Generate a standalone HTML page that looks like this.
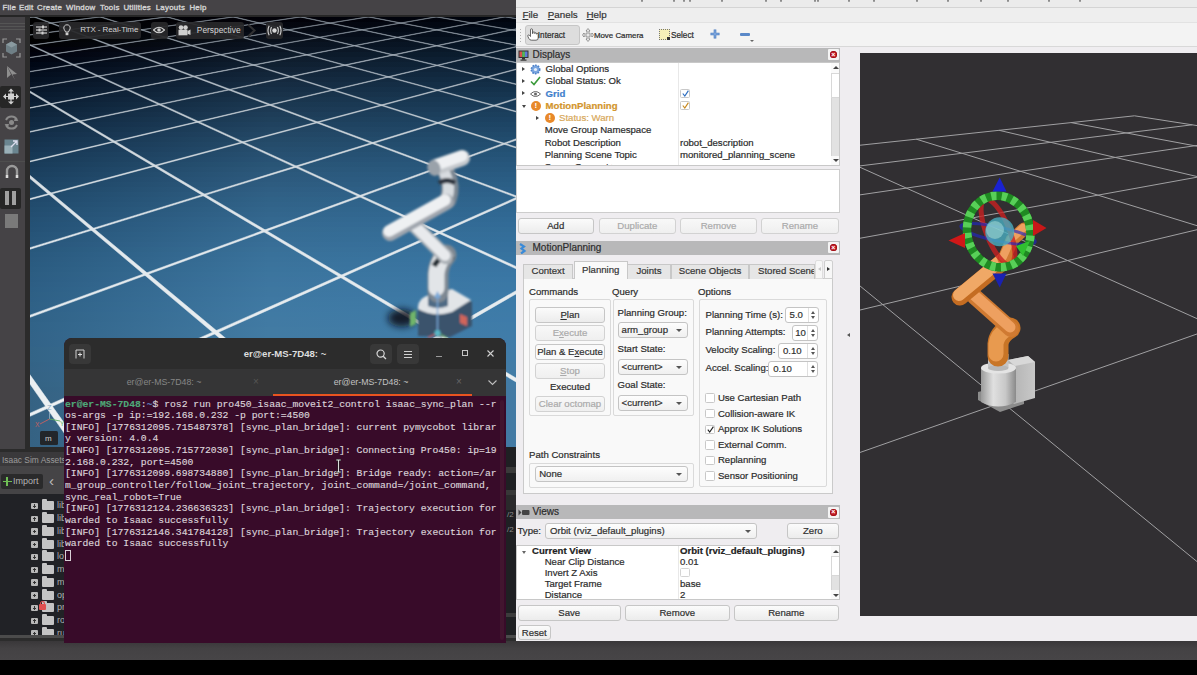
<!DOCTYPE html>
<html><head><meta charset="utf-8">
<style>
*{box-sizing:border-box;margin:0;padding:0}
html,body{width:1197px;height:675px;overflow:hidden;background:#000;font-family:"Liberation Sans",sans-serif}
.abs{position:absolute}
#bottomstrip{left:0;top:641px;width:1197px;height:19px;background:linear-gradient(#393739 0%,#444244 40%,#474547 100%)}
/* ---------- ISAAC ---------- */
#isaac{left:0;top:0;width:516px;height:641px;background:#2b2b2b;overflow:hidden}
#imenu{left:0;top:0;width:516px;height:15px;background:#454346;color:#d8d8d8;font-size:7.9px;line-height:15px;white-space:nowrap;letter-spacing:0.25px;-webkit-text-stroke:0.35px #d0d0d0}
#itool{left:0;top:17px;width:25px;height:432px;background:#454346}
#vp{left:30px;top:17px;width:486px;height:430px;overflow:hidden;background:#2a5b86}
.vbtn{position:absolute;top:4.8px;height:17px;background:rgba(40,40,42,0.92);border-radius:3px;color:#d4d4d4;font-size:8.4px;line-height:16.5px;white-space:nowrap}
#iasset{left:0;top:452px;width:516px;height:14px;background:#3a393b;color:#9c9c9c;font-size:8.4px;line-height:16px;padding-left:2px}
#itbar{left:0;top:466px;width:516px;height:28px;background:#454446}
#itree{left:0;top:494px;width:516px;height:141px;background:#212226}
#isep2{left:0;top:635px;width:516px;height:6px;background:linear-gradient(#4b4b4b 0,#4b4b4b 50%,#2c2c2c 50%)}
.trow{position:absolute;left:31px;height:12px;width:200px}
.tplus{position:absolute;left:0;top:2.5px;width:6.5px;height:6.5px;background:#b8b8b8;border-radius:1px}
.tplus:after{content:"";position:absolute;left:1.5px;top:2.75px;width:3.5px;height:1px;background:#333}
.tplus:before{content:"";position:absolute;left:2.75px;top:1.5px;width:1px;height:3.5px;background:#333}
.tfold{position:absolute;left:11px;top:1px;width:12px;height:9px;background:#c4c4c4;border-radius:1px}
.tfold:before{content:"";position:absolute;left:0;top:-2px;width:5px;height:3px;background:#c4c4c4;border-radius:1px 1px 0 0}
.ttxt{position:absolute;left:26px;top:-1px;color:#b0b0b0;font-size:9px;line-height:12px}
/* ---------- TERMINAL ---------- */
#term{left:64px;top:338px;width:442px;height:305px;background:#380b29;border-radius:8px 8px 0 0;overflow:hidden}
#thead{left:0;top:0;width:442px;height:31px;background:#2c2c2c}
#ttabs{left:0;top:31px;width:442px;height:27px;background:#353536}
#tcontent{left:1px;top:58px;width:440px;height:247px;font-family:"Liberation Mono",monospace;font-size:9.73px;line-height:11.66px;color:#dcd4da;white-space:pre;padding-top:2.5px;-webkit-text-stroke:0.15px currentColor}
/* ---------- RVIZ ---------- */
#rviz{left:516px;top:0;width:681px;height:641px;background:#efedf0;overflow:hidden;color:#3c3c3c}

.rt{position:absolute;white-space:nowrap;font-size:9.6px;color:#2c2c2c;line-height:12px;-webkit-text-stroke:0.2px currentColor}
.btn,.combo,.spin,.tab,.hdr .t{-webkit-text-stroke:0.2px currentColor}
.hdr{position:absolute;left:0;width:323.5px;height:14px;background:#b8b8b9}
.hdr .t{position:absolute;left:16.5px;top:0;font-size:10px;line-height:14px;color:#2c2c2c}
.xbtn{position:absolute;left:312px;top:1.5px;width:11px;height:11px;background:#f4f4f4;border-radius:1px}
.xbtn:after{content:"";position:absolute;left:2px;top:2px;width:7px;height:7px;border-radius:50%;background:#c8202a;box-shadow:inset 0 0 0 1px #a01018}
.xbtn:before{content:"\00d7";position:absolute;left:3.3px;top:0.5px;font-size:7px;line-height:10px;color:#fff;z-index:2;font-weight:bold}
.btn{position:absolute;height:16px;background:linear-gradient(#fbfbfb,#ececec);border:1px solid #c6c6c6;border-radius:3px;font-size:9.6px;line-height:14px;text-align:center;color:#303030;white-space:nowrap}
.btn.dis{color:#aaaaaa;border-color:#d2d2d2;background:linear-gradient(#f8f8f8,#efefef)}
.combo{position:absolute;height:16px;background:linear-gradient(#fdfdfd,#f0f0f0);border:1px solid #c4c4c4;border-radius:3px;font-size:9.6px;line-height:14px;color:#303030;padding-left:3px;white-space:nowrap}
.combo:after{content:"";position:absolute;right:4.5px;top:6px;border-left:3px solid transparent;border-right:3px solid transparent;border-top:3px solid #555}
.spin{position:absolute;height:16px;background:#fff;border:1px solid #c4c4c4;border-radius:3px;font-size:9.6px;line-height:14px;color:#303030;padding-left:4px}
.spin:after{content:"";position:absolute;right:0;top:0;width:9px;height:14px;border-left:1px solid #e0e0e0}
.sp1{position:absolute;right:2.5px;top:3px;border-left:2.5px solid transparent;border-right:2.5px solid transparent;border-bottom:3px solid #555}
.sp2{position:absolute;right:2.5px;bottom:3px;border-left:2.5px solid transparent;border-right:2.5px solid transparent;border-top:3px solid #555}
.cb{position:absolute;width:9.5px;height:9.5px;background:#fff;border:1px solid #c8c8c8;border-radius:1.5px}
.gbox{position:absolute;border:1px solid #dadada;border-radius:2px}
.tab{position:absolute;top:264px;height:14.5px;background:#e6e6e6;border:1px solid #c8c8c8;border-bottom:none;font-size:9.6px;line-height:12px;text-align:center;color:#353535;white-space:nowrap;overflow:hidden}
.arr{position:absolute;width:0;height:0;border-top:2.5px solid transparent;border-bottom:2.5px solid transparent;border-left:3px solid #444}
.arrd{position:absolute;width:0;height:0;border-left:2.5px solid transparent;border-right:2.5px solid transparent;border-top:3px solid #444}
.sbar{position:absolute;left:314.5px;width:9px;background:#e2e2e2;border-left:1px solid #d4d4d4}
#r3d{left:344px;top:53px;width:337px;height:563px;background:#312f32;overflow:hidden}
</style></head>
<body>
<div id="bottomstrip" class="abs"></div>

<div id="isaac" class="abs">
  <div id="imenu" class="abs"><span style="position:absolute;left:2.5px;top:0px">File</span><span style="position:absolute;left:18.9px;top:0px">Edit</span><span style="position:absolute;left:37.0px;top:0px">Create</span><span style="position:absolute;left:66.0px;top:0px">Window</span><span style="position:absolute;left:100.0px;top:0px">Tools</span><span style="position:absolute;left:123.4px;top:0px">Utilities</span><span style="position:absolute;left:155.7px;top:0px">Layouts</span><span style="position:absolute;left:189.4px;top:0px">Help</span></div>
  <div class="abs" style="left:0;top:15px;width:516px;height:2px;background:#262626"></div>
  <div id="itool" class="abs">
<div class="abs" style="left:0;top:6px;width:25px;height:1px;background:#555"></div>
<div class="abs" style="left:0;top:9px;width:25px;height:1px;background:#555"></div>
<div class="abs" style="left:0;top:12px;width:25px;height:1px;background:#555"></div>
<svg class="abs" style="left:2px;top:21px" width="19" height="20" viewBox="0 0 19 20"><path d="M1 5 V1 H5 M14 1 H18 V5 M18 15 V19 H14 M5 19 H1 V15" fill="none" stroke="#9a9a9a" stroke-width="1.2"/><path d="M9.5 3.5 L15 6.5 L15 13.5 L9.5 16.5 L4 13.5 L4 6.5Z" fill="#6f7f86"/><path d="M4 6.5 L9.5 9.5 L15 6.5 L9.5 3.5Z" fill="#8a9aa0"/></svg>
<svg class="abs" style="left:6px;top:48px" width="12" height="16" viewBox="0 0 12 16"><path d="M1 1 L11 9 L6.5 9.5 L9 15 L1 1Z" fill="#8e8e8e"/><path d="M1 1 L1 13 L5 9.5Z" fill="#8e8e8e"/></svg>
<div class="abs" style="left:0;top:69px;width:21px;height:21.5px;background:#262626;border-radius:2px"></div>
<svg class="abs" style="left:3px;top:71px" width="16" height="17" viewBox="0 0 16 17"><path d="M8 0.5 L11 3.5 H5Z M8 16.5 L11 13.5 H5Z M0 8.5 L3 5.5 V11.5Z M16 8.5 L13 5.5 V11.5Z" fill="#d0d0d0"/><rect x="5" y="5.5" width="6" height="6" fill="#d0d0d0"/><path d="M8 3 V14 M2.5 8.5 H13.5" stroke="#d0d0d0" stroke-width="1.2"/></svg>
<svg class="abs" style="left:3px;top:97px" width="17" height="17" viewBox="0 0 17 17"><path d="M3 6 A6 6 0 0 1 14 6 M14 11 A6 6 0 0 1 3 11" fill="none" stroke="#8a8a8a" stroke-width="2"/><path d="M12 3.5 L15.5 7 L11 7Z M5 13.5 L1.5 10 L6 10Z" fill="#8a8a8a"/><circle cx="8.5" cy="8.5" r="2.5" fill="#8a8a8a"/></svg>
<svg class="abs" style="left:4px;top:122px" width="15" height="15" viewBox="0 0 15 15"><rect x="0.5" y="0.5" width="14" height="14" fill="#6a8590"/><rect x="0.5" y="6.5" width="8" height="8" fill="#9ab0b8"/><path d="M7 8 L13 2 M9 2 H13 V6" stroke="#dde" stroke-width="1.3" fill="none"/></svg>
<div class="abs" style="left:0;top:144px;width:25px;height:1px;background:#4e4e4e"></div>
<svg class="abs" style="left:5px;top:147px" width="14" height="15" viewBox="0 0 14 15"><path d="M2 14 V7 A5 5 0 0 1 12 7 V14" fill="none" stroke="#9a9a9a" stroke-width="2.4"/><rect x="0.8" y="11" width="2.4" height="3" fill="#ddd"/><rect x="10.8" y="11" width="2.4" height="3" fill="#ddd"/></svg>
<div class="abs" style="left:0;top:170.5px;width:21px;height:21.5px;background:#262626;border-radius:2px"></div>
<div class="abs" style="left:4.5px;top:174px;width:4.5px;height:14px;background:#a0a0a0"></div>
<div class="abs" style="left:11.5px;top:174px;width:4.5px;height:14px;background:#a0a0a0"></div>
<div class="abs" style="left:5px;top:197px;width:13px;height:14px;background:#7a7a7a"></div>

  </div>
  <div id="vp" class="abs">
<div style="position:absolute;left:0;top:0px;width:486px;height:5px;background:linear-gradient(90deg,#000000,#020108 49%,#00050f)"></div><div style="position:absolute;left:0;top:5px;width:486px;height:5px;background:linear-gradient(90deg,#000000,#04050d 49%,#010814)"></div><div style="position:absolute;left:0;top:10px;width:486px;height:5px;background:linear-gradient(90deg,#000000,#050912 49%,#020c19)"></div><div style="position:absolute;left:0;top:15px;width:486px;height:5px;background:linear-gradient(90deg,#000000,#070c17 49%,#040f1d)"></div><div style="position:absolute;left:0;top:20px;width:486px;height:5px;background:linear-gradient(90deg,#000000,#09101b 49%,#061322)"></div><div style="position:absolute;left:0;top:25px;width:486px;height:5px;background:linear-gradient(90deg,#000003,#0a1320 49%,#071626)"></div><div style="position:absolute;left:0;top:30px;width:486px;height:5px;background:linear-gradient(90deg,#000008,#0c1624 49%,#091a2b)"></div><div style="position:absolute;left:0;top:35px;width:486px;height:5px;background:linear-gradient(90deg,#00010c,#0d1a29 49%,#0a1d2f)"></div><div style="position:absolute;left:0;top:40px;width:486px;height:5px;background:linear-gradient(90deg,#000410,#0f1d2d 49%,#0c2034)"></div><div style="position:absolute;left:0;top:45px;width:486px;height:5px;background:linear-gradient(90deg,#000715,#102031 49%,#0d2338)"></div><div style="position:absolute;left:0;top:50px;width:486px;height:5px;background:linear-gradient(90deg,#020a19,#122336 49%,#0f263c)"></div><div style="position:absolute;left:0;top:55px;width:486px;height:5px;background:linear-gradient(90deg,#030d1d,#13263a 49%,#102940)"></div><div style="position:absolute;left:0;top:60px;width:486px;height:5px;background:linear-gradient(90deg,#041021,#15293e 49%,#112c44)"></div><div style="position:absolute;left:0;top:65px;width:486px;height:5px;background:linear-gradient(90deg,#061325,#162c42 49%,#132f48)"></div><div style="position:absolute;left:0;top:70px;width:486px;height:5px;background:linear-gradient(90deg,#071629,#172f46 49%,#14324c)"></div><div style="position:absolute;left:0;top:75px;width:486px;height:5px;background:linear-gradient(90deg,#08192d,#193249 49%,#163550)"></div><div style="position:absolute;left:0;top:80px;width:486px;height:5px;background:linear-gradient(90deg,#0a1c31,#1a354d 49%,#173854)"></div><div style="position:absolute;left:0;top:85px;width:486px;height:5px;background:linear-gradient(90deg,#0b1f34,#1b3851 49%,#183a57)"></div><div style="position:absolute;left:0;top:90px;width:486px;height:5px;background:linear-gradient(90deg,#0c2238,#1d3a54 49%,#1a3d5b)"></div><div style="position:absolute;left:0;top:95px;width:486px;height:5px;background:linear-gradient(90deg,#0e243b,#1e3d58 49%,#1b405e)"></div><div style="position:absolute;left:0;top:100px;width:486px;height:5px;background:linear-gradient(90deg,#0f273f,#1f405b 49%,#1c4262)"></div><div style="position:absolute;left:0;top:105px;width:486px;height:5px;background:linear-gradient(90deg,#102942,#20425f 49%,#1d4565)"></div><div style="position:absolute;left:0;top:110px;width:486px;height:5px;background:linear-gradient(90deg,#112c45,#224562 49%,#1f4768)"></div><div style="position:absolute;left:0;top:115px;width:486px;height:5px;background:linear-gradient(90deg,#132e49,#234765 49%,#204a6b)"></div><div style="position:absolute;left:0;top:120px;width:486px;height:5px;background:linear-gradient(90deg,#14314c,#244a68 49%,#214c6e)"></div><div style="position:absolute;left:0;top:125px;width:486px;height:5px;background:linear-gradient(90deg,#15334f,#254c6b 49%,#224e71)"></div><div style="position:absolute;left:0;top:130px;width:486px;height:5px;background:linear-gradient(90deg,#163552,#264e6e 49%,#235174)"></div><div style="position:absolute;left:0;top:135px;width:486px;height:5px;background:linear-gradient(90deg,#173855,#275071 49%,#245377)"></div><div style="position:absolute;left:0;top:140px;width:486px;height:5px;background:linear-gradient(90deg,#183a57,#285274 49%,#26557a)"></div><div style="position:absolute;left:0;top:145px;width:486px;height:5px;background:linear-gradient(90deg,#193c5a,#295576 49%,#27577d)"></div><div style="position:absolute;left:0;top:150px;width:486px;height:5px;background:linear-gradient(90deg,#1a3e5d,#2b5779 49%,#28597f)"></div><div style="position:absolute;left:0;top:155px;width:486px;height:5px;background:linear-gradient(90deg,#1b405f,#2c597c 49%,#295b82)"></div><div style="position:absolute;left:0;top:160px;width:486px;height:5px;background:linear-gradient(90deg,#1c4262,#2d5a7e 49%,#2a5d84)"></div><div style="position:absolute;left:0;top:165px;width:486px;height:5px;background:linear-gradient(90deg,#1d4464,#2e5c80 49%,#2b5f86)"></div><div style="position:absolute;left:0;top:170px;width:486px;height:5px;background:linear-gradient(90deg,#1e4666,#2f5e83 49%,#2c6089)"></div><div style="position:absolute;left:0;top:175px;width:486px;height:5px;background:linear-gradient(90deg,#1f4869,#306085 49%,#2d628b)"></div><div style="position:absolute;left:0;top:180px;width:486px;height:5px;background:linear-gradient(90deg,#20496b,#306287 49%,#2e648d)"></div><div style="position:absolute;left:0;top:185px;width:486px;height:5px;background:linear-gradient(90deg,#214b6d,#316389 49%,#2f658f)"></div><div style="position:absolute;left:0;top:190px;width:486px;height:5px;background:linear-gradient(90deg,#224d6f,#32658b 49%,#2f6791)"></div><div style="position:absolute;left:0;top:195px;width:486px;height:5px;background:linear-gradient(90deg,#234e71,#33668d 49%,#306893)"></div><div style="position:absolute;left:0;top:200px;width:486px;height:5px;background:linear-gradient(90deg,#245073,#34688f 49%,#316a95)"></div><div style="position:absolute;left:0;top:205px;width:486px;height:5px;background:linear-gradient(90deg,#245175,#356991 49%,#326b97)"></div><div style="position:absolute;left:0;top:210px;width:486px;height:5px;background:linear-gradient(90deg,#255276,#366b92 49%,#336d98)"></div><div style="position:absolute;left:0;top:215px;width:486px;height:5px;background:linear-gradient(90deg,#265478,#366c94 49%,#346e9a)"></div><div style="position:absolute;left:0;top:220px;width:486px;height:5px;background:linear-gradient(90deg,#275579,#376d95 49%,#346f9b)"></div><div style="position:absolute;left:0;top:225px;width:486px;height:5px;background:linear-gradient(90deg,#28567b,#386e97 49%,#35709d)"></div><div style="position:absolute;left:0;top:230px;width:486px;height:5px;background:linear-gradient(90deg,#28587c,#397098 49%,#36719e)"></div><div style="position:absolute;left:0;top:235px;width:486px;height:5px;background:linear-gradient(90deg,#29597e,#39719a 49%,#37739f)"></div><div style="position:absolute;left:0;top:240px;width:486px;height:5px;background:linear-gradient(90deg,#2a5a7f,#3a729b 49%,#3774a1)"></div><div style="position:absolute;left:0;top:245px;width:486px;height:5px;background:linear-gradient(90deg,#2a5b80,#3b739c 49%,#3874a2)"></div><div style="position:absolute;left:0;top:250px;width:486px;height:5px;background:linear-gradient(90deg,#2b5c81,#3b749d 49%,#3975a3)"></div><div style="position:absolute;left:0;top:255px;width:486px;height:5px;background:linear-gradient(90deg,#2c5d82,#3c759e 49%,#3976a4)"></div><div style="position:absolute;left:0;top:260px;width:486px;height:5px;background:linear-gradient(90deg,#2c5d83,#3d759f 49%,#3a77a5)"></div><div style="position:absolute;left:0;top:265px;width:486px;height:5px;background:linear-gradient(90deg,#2d5e84,#3d76a0 49%,#3b78a5)"></div><div style="position:absolute;left:0;top:270px;width:486px;height:5px;background:linear-gradient(90deg,#2d5f85,#3e77a0 49%,#3b78a6)"></div><div style="position:absolute;left:0;top:275px;width:486px;height:5px;background:linear-gradient(90deg,#2e6085,#3e77a1 49%,#3c79a7)"></div><div style="position:absolute;left:0;top:280px;width:486px;height:5px;background:linear-gradient(90deg,#2e6086,#3f78a2 49%,#3c7aa7)"></div><div style="position:absolute;left:0;top:285px;width:486px;height:5px;background:linear-gradient(90deg,#2f6186,#3f79a2 49%,#3d7aa8)"></div><div style="position:absolute;left:0;top:290px;width:486px;height:5px;background:linear-gradient(90deg,#2f6187,#4079a3 49%,#3d7ba8)"></div><div style="position:absolute;left:0;top:295px;width:486px;height:5px;background:linear-gradient(90deg,#306287,#407aa3 49%,#3e7ba8)"></div><div style="position:absolute;left:0;top:300px;width:486px;height:5px;background:linear-gradient(90deg,#306287,#417aa3 49%,#3e7ba9)"></div><div style="position:absolute;left:0;top:305px;width:486px;height:5px;background:linear-gradient(90deg,#316388,#417aa3 49%,#3f7ca9)"></div><div style="position:absolute;left:0;top:310px;width:486px;height:5px;background:linear-gradient(90deg,#316388,#427ba3 49%,#3f7ca9)"></div><div style="position:absolute;left:0;top:315px;width:486px;height:5px;background:linear-gradient(90deg,#326388,#427ba3 49%,#407ca9)"></div><div style="position:absolute;left:0;top:320px;width:486px;height:5px;background:linear-gradient(90deg,#326388,#427ba3 49%,#407ca9)"></div><div style="position:absolute;left:0;top:325px;width:486px;height:5px;background:linear-gradient(90deg,#326388,#437ba3 49%,#407ca9)"></div><div style="position:absolute;left:0;top:330px;width:486px;height:5px;background:linear-gradient(90deg,#336487,#437ba3 49%,#417ca9)"></div><div style="position:absolute;left:0;top:335px;width:486px;height:5px;background:linear-gradient(90deg,#336487,#437ba3 49%,#417ca8)"></div><div style="position:absolute;left:0;top:340px;width:486px;height:5px;background:linear-gradient(90deg,#336487,#447ba2 49%,#417ca8)"></div><div style="position:absolute;left:0;top:345px;width:486px;height:5px;background:linear-gradient(90deg,#336386,#447ba2 49%,#427ca7)"></div><div style="position:absolute;left:0;top:350px;width:486px;height:5px;background:linear-gradient(90deg,#346386,#447ba1 49%,#427ca7)"></div><div style="position:absolute;left:0;top:355px;width:486px;height:5px;background:linear-gradient(90deg,#346385,#457aa1 49%,#427ca6)"></div><div style="position:absolute;left:0;top:360px;width:486px;height:5px;background:linear-gradient(90deg,#346385,#457aa0 49%,#427ba6)"></div><div style="position:absolute;left:0;top:365px;width:486px;height:5px;background:linear-gradient(90deg,#346384,#457a9f 49%,#427ba5)"></div><div style="position:absolute;left:0;top:370px;width:486px;height:5px;background:linear-gradient(90deg,#346283,#45799f 49%,#437aa4)"></div><div style="position:absolute;left:0;top:375px;width:486px;height:5px;background:linear-gradient(90deg,#356283,#45799e 49%,#437aa4)"></div><div style="position:absolute;left:0;top:380px;width:486px;height:5px;background:linear-gradient(90deg,#356283,#45799e 49%,#437aa4)"></div><div style="position:absolute;left:0;top:385px;width:486px;height:5px;background:linear-gradient(90deg,#356283,#45799e 49%,#437aa4)"></div><div style="position:absolute;left:0;top:390px;width:486px;height:5px;background:linear-gradient(90deg,#356283,#45799e 49%,#437aa4)"></div><div style="position:absolute;left:0;top:395px;width:486px;height:5px;background:linear-gradient(90deg,#356283,#45799e 49%,#437aa4)"></div><div style="position:absolute;left:0;top:400px;width:486px;height:5px;background:linear-gradient(90deg,#356283,#45799e 49%,#437aa4)"></div><div style="position:absolute;left:0;top:405px;width:486px;height:5px;background:linear-gradient(90deg,#356283,#45799e 49%,#437aa4)"></div><div style="position:absolute;left:0;top:410px;width:486px;height:5px;background:linear-gradient(90deg,#356283,#45799e 49%,#437aa4)"></div><div style="position:absolute;left:0;top:415px;width:486px;height:5px;background:linear-gradient(90deg,#356283,#45799e 49%,#437aa4)"></div><div style="position:absolute;left:0;top:420px;width:486px;height:5px;background:linear-gradient(90deg,#356283,#45799e 49%,#437aa4)"></div><div style="position:absolute;left:0;top:425px;width:486px;height:5px;background:linear-gradient(90deg,#356283,#45799e 49%,#437aa4)"></div><svg class="abs" style="left:0;top:0" width="486" height="430" viewBox="0 0 486 430"><defs><linearGradient id="lnfade" gradientUnits="userSpaceOnUse" x1="0" y1="0" x2="0" y2="430"><stop offset="0" stop-color="#8a949e"/><stop offset="0.1" stop-color="#aab4be"/><stop offset="0.25" stop-color="#ccd4da"/><stop offset="0.5" stop-color="#e2e8ec"/><stop offset="1" stop-color="#eef2f4"/></linearGradient></defs><g fill="url(#lnfade)" stroke="url(#lnfade)" stroke-width="0.5"><polygon points="77.4,-84.0 76.9,-84.0 22794.3,2465.6 22309.9,2407.0"/><polygon points="59.4,-83.1 58.9,-83.0 21467.2,2474.0 21012.5,2415.3"/><polygon points="40.8,-82.1 40.3,-82.1 20140.0,2482.5 19715.2,2423.6"/><polygon points="21.6,-81.1 21.1,-81.1 18812.9,2490.9 18417.8,2431.8"/><polygon points="1.8,-80.1 1.2,-80.1 17485.7,2499.4 17120.4,2440.1"/><polygon points="-18.7,-79.1 -19.3,-79.1 16158.6,2507.9 15823.1,2448.4"/><polygon points="-39.9,-78.0 -40.5,-78.0 14831.4,2516.3 14525.7,2456.7"/><polygon points="-61.9,-76.9 -62.5,-76.9 13504.3,2524.8 13228.4,2464.9"/><polygon points="-84.6,-75.7 -85.3,-75.7 12177.1,2533.2 11931.0,2473.2"/><polygon points="-108.2,-74.5 -108.9,-74.5 10850.0,2541.7 10633.6,2481.5"/><polygon points="-132.7,-73.3 -133.3,-73.3 9522.8,2550.2 9336.3,2489.7"/><polygon points="-158.0,-72.0 -158.7,-72.0 8195.7,2558.6 8038.9,2498.0"/><polygon points="-184.4,-70.7 -185.1,-70.6 6868.5,2567.1 6741.6,2506.3"/><polygon points="-211.7,-69.3 -212.5,-69.3 5541.4,2575.5 5444.2,2514.5"/><polygon points="-240.2,-67.8 -241.0,-67.8 4214.2,2584.0 4146.9,2522.8"/><polygon points="-269.8,-66.3 -270.6,-66.3 2887.1,2592.5 2849.5,2531.1"/><polygon points="-300.7,-64.8 -301.5,-64.7 1559.9,2600.9 1552.1,2539.4"/><polygon points="-332.9,-63.1 -333.8,-63.1 232.8,2609.4 254.8,2547.6"/><polygon points="-366.4,-61.4 -367.4,-61.4 -1094.3,2617.8 -1042.6,2555.9"/><polygon points="-401.5,-59.7 -402.5,-59.6 -2421.5,2626.3 -2339.9,2564.2"/><polygon points="-438.2,-57.8 -439.2,-57.7 -3748.6,2634.7 -3637.3,2572.4"/><polygon points="-476.5,-55.8 -477.6,-55.8 -5075.8,2643.2 -4934.6,2580.7"/><polygon points="-516.7,-53.8 -517.8,-53.7 -6402.9,2651.7 -6232.0,2589.0"/><polygon points="-558.9,-51.7 -560.0,-51.6 -7730.1,2660.1 -7529.4,2597.2"/><polygon points="-603.1,-49.4 -604.3,-49.3 -9057.2,2668.6 -8826.7,2605.5"/><polygon points="-649.6,-47.0 -650.9,-47.0 -10384.4,2677.0 -10124.1,2613.8"/><polygon points="-698.6,-44.6 -700.0,-44.5 -11711.5,2685.5 -11421.4,2622.0"/><polygon points="-750.2,-41.9 -751.7,-41.9 -13038.7,2694.0 -12718.8,2630.3"/><polygon points="-804.7,-39.2 -806.2,-39.1 -14365.8,2702.4 -14016.1,2638.6"/><polygon points="-862.3,-36.2 -863.9,-36.2 -15693.0,2710.9 -15313.5,2646.9"/><polygon points="-923.3,-33.1 -925.0,-33.1 -17020.1,2719.3 -16610.9,2655.1"/><polygon points="-988.0,-29.9 -989.8,-29.8 -18347.3,2727.8 -17908.2,2663.4"/><polygon points="326.2,-96.6 326.4,-96.6 -60606.9,2999.5 -59157.0,2924.1"/><polygon points="335.1,-96.2 335.4,-96.2 -59181.9,2990.4 -57766.3,2915.3"/><polygon points="344.3,-95.7 344.6,-95.7 -57756.9,2981.3 -56375.6,2906.4"/><polygon points="353.7,-95.2 354.0,-95.2 -56331.9,2972.2 -54984.8,2897.5"/><polygon points="363.4,-94.7 363.7,-94.7 -54906.9,2963.1 -53594.1,2888.7"/><polygon points="373.4,-94.2 373.7,-94.2 -53481.9,2954.0 -52203.4,2879.8"/><polygon points="383.6,-93.6 383.9,-93.6 -52056.9,2945.0 -50812.7,2870.9"/><polygon points="394.2,-93.1 394.5,-93.1 -50631.9,2935.9 -49422.0,2862.1"/><polygon points="405.0,-92.5 405.3,-92.5 -49207.0,2926.8 -48031.3,2853.2"/><polygon points="416.2,-92.0 416.5,-91.9 -47782.0,2917.7 -46640.6,2844.3"/><polygon points="427.7,-91.4 428.0,-91.3 -46357.0,2908.6 -45249.9,2835.5"/><polygon points="439.5,-90.7 439.9,-90.7 -44932.0,2899.5 -43859.2,2826.6"/><polygon points="451.8,-90.1 452.1,-90.1 -43507.0,2890.5 -42468.5,2817.7"/><polygon points="464.4,-89.4 464.7,-89.4 -42082.0,2881.4 -41077.8,2808.9"/><polygon points="477.4,-88.8 477.7,-88.8 -40657.0,2872.3 -39687.1,2800.0"/><polygon points="490.8,-88.1 491.2,-88.1 -39232.0,2863.2 -38296.4,2791.2"/><polygon points="504.7,-87.4 505.1,-87.3 -37807.0,2854.1 -36905.7,2782.3"/><polygon points="519.1,-86.6 519.5,-86.6 -36382.0,2845.1 -35515.0,2773.4"/><polygon points="533.9,-85.8 534.3,-85.8 -34957.1,2836.0 -34124.3,2764.6"/><polygon points="549.2,-85.0 549.7,-85.0 -33532.1,2826.9 -32733.6,2755.7"/><polygon points="565.1,-84.2 565.6,-84.2 -32107.1,2817.8 -31342.9,2746.8"/><polygon points="581.6,-83.4 582.1,-83.3 -30682.1,2808.7 -29952.2,2738.0"/><polygon points="598.7,-82.5 599.2,-82.4 -29257.1,2799.6 -28561.5,2729.1"/><polygon points="616.4,-81.5 616.9,-81.5 -27832.1,2790.6 -27170.8,2720.2"/><polygon points="634.8,-80.6 635.3,-80.6 -26407.1,2781.5 -25780.1,2711.4"/><polygon points="653.9,-79.6 654.4,-79.6 -24982.1,2772.4 -24389.4,2702.5"/><polygon points="673.8,-78.6 674.3,-78.5 -23557.1,2763.3 -22998.7,2693.6"/><polygon points="694.4,-77.5 695.0,-77.5 -22132.1,2754.2 -21608.0,2684.8"/><polygon points="716.0,-76.4 716.6,-76.3 -20707.1,2745.1 -20217.3,2675.9"/><polygon points="738.4,-75.2 739.0,-75.2 -19282.2,2736.1 -18826.6,2667.1"/><polygon points="761.8,-74.0 762.4,-74.0 -17857.2,2727.0 -17435.9,2658.2"/><polygon points="786.2,-72.7 786.9,-72.7 -16432.2,2717.9 -16045.2,2649.3"/><polygon points="811.7,-71.4 812.4,-71.4 -15007.2,2708.8 -14654.5,2640.5"/><polygon points="838.4,-70.0 839.2,-70.0 -13582.2,2699.7 -13263.8,2631.6"/><polygon points="866.4,-68.6 867.1,-68.5 -12157.2,2690.6 -11873.1,2622.7"/><polygon points="895.7,-67.0 896.5,-67.0 -10732.2,2681.6 -10482.4,2613.9"/><polygon points="926.4,-65.4 927.3,-65.4 -9307.2,2672.5 -9091.7,2605.0"/><polygon points="958.7,-63.8 959.6,-63.7 -7882.2,2663.4 -7701.0,2596.1"/><polygon points="992.7,-62.0 993.7,-61.9 -6457.2,2654.3 -6310.2,2587.3"/><polygon points="1028.5,-60.1 1029.5,-60.1 -5032.2,2645.2 -4919.5,2578.4"/><polygon points="1066.3,-58.2 1067.3,-58.1 -3607.3,2636.1 -3528.8,2569.5"/><polygon points="1106.2,-56.1 1107.3,-56.0 -2182.3,2627.1 -2138.1,2560.7"/><polygon points="1148.4,-53.9 1149.6,-53.8 -757.3,2618.0 -747.4,2551.8"/><polygon points="1193.2,-51.6 1194.4,-51.5 667.7,2608.9 643.3,2543.0"/><polygon points="1240.6,-49.1 1242.0,-49.0 2092.7,2599.8 2034.0,2534.1"/><polygon points="1291.2,-46.5 1292.6,-46.4 3517.7,2590.7 3424.7,2525.2"/><polygon points="1345.0,-43.7 1346.5,-43.6 4942.7,2581.6 4815.4,2516.4"/><polygon points="1402.5,-40.7 1404.1,-40.6 6367.7,2572.6 6206.1,2507.5"/><polygon points="1464.0,-37.5 1465.7,-37.4 7792.7,2563.5 7596.8,2498.6"/><polygon points="1530.0,-34.1 1531.9,-34.0 9217.7,2554.4 8987.5,2489.8"/><polygon points="1601.0,-30.4 1603.0,-30.3 10642.6,2545.3 10378.2,2480.9"/><polygon points="1677.6,-26.4 1679.8,-26.3 12067.6,2536.2 11768.9,2472.0"/><polygon points="1760.5,-22.1 1762.8,-22.0 13492.6,2527.1 13159.6,2463.2"/><polygon points="1850.4,-17.4 1852.9,-17.3 14917.6,2518.1 14550.3,2454.3"/><polygon points="1948.3,-12.3 1951.1,-12.2 16342.6,2509.0 15941.0,2445.4"/><polygon points="2055.3,-6.8 2058.4,-6.6 17767.6,2499.9 17331.7,2436.6"/><polygon points="2172.9,-0.7 2176.2,-0.5 19192.6,2490.8 18722.4,2427.7"/><polygon points="2302.4,6.1 2306.1,6.3 20617.6,2481.7 20113.1,2418.9"/><polygon points="2446.1,13.5 2450.2,13.7 22042.6,2472.7 21503.8,2410.0"/><polygon points="2606.2,21.8 2610.8,22.1 23467.6,2463.6 22894.5,2401.1"/><polygon points="2785.8,31.2 2790.9,31.4 24892.6,2454.5 24285.2,2392.3"/><polygon points="2988.6,41.7 2994.4,42.0 26317.5,2445.4 25675.9,2383.4"/><polygon points="3219.4,53.7 3226.1,54.1 27742.5,2436.3 27066.6,2374.5"/><polygon points="3484.6,67.5 3492.3,67.9 29167.5,2427.2 28457.3,2365.7"/><polygon points="3792.4,83.5 3801.4,84.0 30592.5,2418.2 29848.0,2356.8"/><polygon points="4153.9,102.3 4164.5,102.8 32017.5,2409.1 31238.7,2347.9"/><polygon points="4584.5,124.7 4597.3,125.3 33442.5,2400.0 32629.4,2339.1"/><polygon points="5106.3,151.8 5121.9,152.6 34867.5,2390.9 34020.1,2330.2"/><polygon points="5751.5,185.3 5771.1,186.3 36292.5,2381.8 35410.8,2321.3"/><polygon points="6569.8,227.8 6595.0,229.1 37717.5,2372.7 36801.5,2312.5"/></g></svg>
<svg class="abs" style="left:0;top:0" width="486" height="430" viewBox="30 17 486 430">
<defs>
<filter id="blur3" x="-50%" y="-50%" width="200%" height="200%"><feGaussianBlur stdDeviation="3.5"/></filter>
<filter id="blur1" x="-20%" y="-20%" width="140%" height="140%"><feGaussianBlur stdDeviation="0.8"/></filter>
<linearGradient id="armg" x1="0" y1="0" x2="1" y2="1"><stop offset="0" stop-color="#f2f3f4"/><stop offset="0.6" stop-color="#d0d4d8"/><stop offset="1" stop-color="#7a828c"/></linearGradient>
</defs>
<ellipse cx="402" cy="318" rx="14" ry="9" fill="#0a1018" opacity="0.85" filter="url(#blur3)"/>
<g filter="url(#blur1)">
<!-- base -->
<path d="M418,306 L418,336 L450,337 L472,326 L472,302 L451,289 L428,295 Z" fill="#3a536c"/>
<path d="M418,307 Q419,297 430,295 L452,289 L471,300 L452,312 Q434,318 418,309Z" fill="#e2e5e8"/>
<!-- column -->
<path d="M428,280 L448,280 L448,306 Q438,310 428,306Z" fill="#4f6a84"/>
<!-- lower curved section -->
<path d="M438,292 L438,274 Q439,262 446,255" fill="none" stroke="#7e8892" stroke-width="21" stroke-linecap="round"/>
<path d="M436.5,288 L436.5,274 Q437.5,263 444,256" fill="none" stroke="#e2e5e8" stroke-width="16" stroke-linecap="round"/>
<path d="M434,266 Q442,252 453,260" fill="none" stroke="#262d36" stroke-width="5.5"/>
<!-- forearm -->
<path d="M446,257 L415,226" fill="none" stroke="#aab0b6" stroke-width="14.5" stroke-linecap="round"/>
<path d="M445,255.5 L414,225" fill="none" stroke="#e8eaed" stroke-width="10.5" stroke-linecap="round"/>
<!-- wrist -->
<path d="M448,200 Q453,186 446,172" fill="none" stroke="#7d8792" stroke-width="17" stroke-linecap="round"/><path d="M447,198 Q451,186 445,174" fill="none" stroke="#d8dce0" stroke-width="11" stroke-linecap="round"/><path d="M439,183 Q447,178 455,183" fill="none" stroke="#2e3640" stroke-width="5"/>
<!-- upper arm -->
<path d="M390,233 L446,202" fill="none" stroke="#a0a6ae" stroke-width="16" stroke-linecap="round"/>
<path d="M389,231 L445,200" fill="none" stroke="#eef0f2" stroke-width="11.5" stroke-linecap="round"/>
<!-- end cylinder -->
<path d="M436,167 L462,158" fill="none" stroke="#c4c8cc" stroke-width="16" stroke-linecap="round"/>
<path d="M436,165 L462,156" fill="none" stroke="#eef0f2" stroke-width="11" stroke-linecap="round"/>
<ellipse cx="434" cy="168" rx="6.5" ry="8" fill="#9aa2aa" transform="rotate(-18 434 168)"/>
<!-- gizmo -->
<path d="M410,313 L416,310 L416,324 L410,327Z" fill="#6fb56a"/>
<path d="M460,314 L467,317 L467,326 L460,323Z" fill="#d0655a"/>
<line x1="437.5" y1="333" x2="437.5" y2="296" stroke="#7aa8d8" stroke-width="1.3"/>
<path d="M434,298 L437.5,291 L441,298Z" fill="#7aa8d8"/>
<path d="M437,333 L428,338" stroke="#d05a5a" stroke-width="1.2"/>
<path d="M438,333 L447,338" stroke="#6ab06a" stroke-width="1.2"/>
<circle cx="437.5" cy="333" r="3" fill="#58b8c8"/>
</g>
<!-- axis indicator bottom-left -->
<text x="47" y="410" font-family="Liberation Sans" font-size="7.5" fill="#8aa8c0">Z</text>
<line x1="49.5" y1="412" x2="49.5" y2="419" stroke="#8aa8c0" stroke-width="0.9"/>
<line x1="49.5" y1="419" x2="40" y2="424" stroke="#c86060" stroke-width="0.9"/>
<line x1="49.5" y1="419" x2="60" y2="421" stroke="#60b060" stroke-width="0.9"/>
<text x="35" y="427" font-family="Liberation Sans" font-size="6.5" fill="#c86060">X</text>
<text x="60" y="426" font-family="Liberation Sans" font-size="6.5" fill="#60b060">Y</text>
<rect x="40" y="431" width="18" height="14" rx="1.5" fill="#22262a"/>
<text x="45" y="441" font-family="Liberation Sans" font-size="8" fill="#d0d0d0">m</text>
</svg>

<div class="vbtn" style="left:2.7px;width:16.5px">
  <svg class="abs" style="left:3px;top:3.5px" width="11" height="10" viewBox="0 0 11 10"><g stroke="#cfcfcf" stroke-width="1.2"><line x1="0" y1="2" x2="11" y2="2"/><line x1="0" y1="5" x2="11" y2="5"/><line x1="0" y1="8" x2="11" y2="8"/></g><g fill="#cfcfcf"><rect x="6" y="0.5" width="2" height="3"/><rect x="2.5" y="3.5" width="2" height="3"/><rect x="5.5" y="6.5" width="2" height="3"/></g></svg>
</div>
<div class="vbtn" style="left:29.2px;width:82px">
  <svg class="abs" style="left:4px;top:2.5px" width="8" height="12" viewBox="0 0 8 12"><path d="M4 0.8 C1.8 0.8 0.8 2.4 0.8 4 C0.8 5.6 2.2 6.6 2.5 8 L5.5 8 C5.8 6.6 7.2 5.6 7.2 4 C7.2 2.4 6.2 0.8 4 0.8 Z" fill="none" stroke="#cfcfcf" stroke-width="1"/><rect x="2.6" y="8.6" width="2.8" height="2.6" fill="#cfcfcf"/></svg>
  <span class="abs" style="left:21px;top:0;font-size:8px;letter-spacing:-0.1px">RTX - Real-Time</span>
</div>
<div class="vbtn" style="left:121px;width:16.5px">
  <svg class="abs" style="left:2px;top:4px" width="12" height="8" viewBox="0 0 12 8"><path d="M0.5 4 Q6 -1.5 11.5 4 Q6 9.5 0.5 4 Z" fill="none" stroke="#cfcfcf" stroke-width="1.1"/><circle cx="6" cy="4" r="1.8" fill="#cfcfcf"/></svg>
</div>
<div class="vbtn" style="left:146.3px;width:68px">
  <svg class="abs" style="left:2px;top:3px" width="13" height="11" viewBox="0 0 13 11"><circle cx="3" cy="2.6" r="2.3" fill="#cfcfcf"/><circle cx="7.5" cy="2.6" r="2.3" fill="#cfcfcf"/><rect x="0.5" y="4.8" width="9" height="5.5" fill="#cfcfcf"/><path d="M9.5 6 L12.5 4.5 L12.5 10 L9.5 8.8Z" fill="#cfcfcf"/></svg>
  <span class="abs" style="left:20.5px;top:0">Perspective</span>
</div>
<svg class="abs" style="left:217px;top:7px" width="9" height="13" viewBox="0 0 9 13"><path d="M1 0.5 L7.5 6.5 L1 12.5" fill="none" stroke="#303032" stroke-width="2.2"/></svg>
<div class="vbtn" style="left:235.7px;width:17.7px">
  <svg class="abs" style="left:1.5px;top:3px" width="15" height="11" viewBox="0 0 15 11"><circle cx="7.5" cy="5.5" r="2.2" fill="#d8d8d8"/><path d="M4.5 2 Q2.8 5.5 4.5 9 M10.5 2 Q12.2 5.5 10.5 9 M2.2 0.8 Q-0.3 5.5 2.2 10.2 M12.8 0.8 Q15.3 5.5 12.8 10.2" fill="none" stroke="#d8d8d8" stroke-width="1.1"/></svg>
</div>

  </div>
  <div id="iasset" class="abs">Isaac Sim Assets</div>
  <div id="itbar" class="abs">
    <div class="abs" style="left:1px;top:8px;width:42px;height:15px;background:#2a2a2b;border-radius:2px;color:#b4b4b4;font-size:9px;line-height:15px;padding-left:12px">Import</div>
    <div class="abs" style="left:2.5px;top:14.8px;width:9px;height:1.6px;background:#6fbf55"></div>
    <div class="abs" style="left:6.2px;top:11px;width:1.6px;height:9px;background:#6fbf55"></div>
    <div class="abs" style="left:49px;top:6.5px;color:#bcbcbc;font-size:15px;line-height:15px">&#8249;</div>
  </div>
  <div id="itree" class="abs">
<div class="trow" style="top:6.4px"><div class="tplus"></div><div class="tfold"></div><div class="ttxt">lib</div></div>
<div class="trow" style="top:19.2px"><div class="tplus"></div><div class="tfold"></div><div class="ttxt">lib</div></div>
<div class="trow" style="top:31.9px"><div class="tplus"></div><div class="tfold"></div><div class="ttxt">lib</div></div>
<div class="trow" style="top:44.6px"><div class="tplus"></div><div class="tfold"></div><div class="ttxt">lib</div></div>
<div class="trow" style="top:57.4px"><div class="tplus"></div><div class="tfold"></div><div class="ttxt">lo</div></div>
<div class="trow" style="top:70.2px"><div class="tplus"></div><div class="tfold"></div><div class="ttxt">m</div></div>
<div class="trow" style="top:82.9px"><div class="tplus"></div><div class="tfold"></div><div class="ttxt">m</div></div>
<div class="trow" style="top:95.6px"><div class="tplus"></div><div class="tfold"></div><div class="ttxt">op</div></div>
<div class="trow" style="top:108.4px"><div class="tplus"></div><div class="tfold"></div><div class="ttxt">pr</div><div class="abs" style="left:8px;top:2px;width:7px;height:6px;background:#e05050;border-radius:1px"></div><div class="abs" style="left:9.3px;top:-1px;width:4.4px;height:5px;border:1.2px solid #e05050;border-bottom:none;border-radius:2.5px 2.5px 0 0"></div></div>
<div class="trow" style="top:121.2px"><div class="tplus"></div><div class="tfold"></div><div class="ttxt">ro</div></div>
<div class="trow" style="top:133.9px"><div class="tplus"></div><div class="tfold"></div><div class="ttxt">ru</div></div>
  </div>
  <div class="abs" style="left:500px;top:447px;width:16px;height:188px;background:#1f2023">
    <div class="abs" style="left:0;top:20px;width:16px;height:6px;background:#3a3a3a"></div>
    <div class="abs" style="left:0;top:43px;width:16px;height:5px;background:#383838"></div>
    <div class="abs" style="left:0;top:48px;width:16px;height:15px;background:#2a2a2b"></div>
    <div class="abs" style="left:7px;top:63px;color:#8a8a8a;font-size:8px;line-height:10px">/2</div>
    <div class="abs" style="left:7px;top:78px;color:#8a8a8a;font-size:8px;line-height:10px">/2</div>
    <div class="abs" style="left:0;top:166px;width:16px;height:4px;background:#3c3c3c"></div>
  </div>
  <div id="isep2" class="abs"></div>
</div>

<div id="term" class="abs">
  <div id="thead" class="abs">
    <div class="abs" style="left:5px;top:6px;width:22px;height:20px;background:#383838;border-radius:4px"></div>
    <svg class="abs" style="left:11px;top:11px" width="10" height="10" viewBox="0 0 10 10"><path d="M1 9.5 V1 H9 V9.5" fill="none" stroke="#cfcfcf" stroke-width="1"/><path d="M5 3.5 V7.5 M3 5.5 H7" stroke="#e0e0e0" stroke-width="1"/></svg>
    <div class="abs" style="left:178px;top:0;width:86px;height:31px;color:#dedede;font-size:9.6px;font-weight:bold;line-height:31px;text-align:center;white-space:nowrap">er@er-MS-7D48: ~</div>
    <div class="abs" style="left:306px;top:6px;width:22px;height:20px;background:#383838;border-radius:4px"></div>
    <svg class="abs" style="left:312px;top:11px" width="11" height="11" viewBox="0 0 11 11"><circle cx="4.6" cy="4.6" r="3.6" fill="none" stroke="#d8d8d8" stroke-width="1.2"/><line x1="7.2" y1="7.2" x2="10" y2="10" stroke="#d8d8d8" stroke-width="1.3"/></svg>
    <div class="abs" style="left:333px;top:6px;width:22px;height:20px;background:#383838;border-radius:4px"></div>
    <div class="abs" style="left:340px;top:12.5px;width:8px;height:1px;background:#d0d0d0"></div>
    <div class="abs" style="left:340px;top:15.5px;width:8px;height:1px;background:#d0d0d0"></div>
    <div class="abs" style="left:340px;top:18.5px;width:8px;height:1px;background:#d0d0d0"></div>
    <div class="abs" style="left:372px;top:17.5px;width:6px;height:1.1px;background:#9a9a9a"></div>
    <div class="abs" style="left:398px;top:12px;width:6px;height:6px;border:1px solid #c4c4c4"></div>
    <svg class="abs" style="left:423px;top:12px" width="7" height="7" viewBox="0 0 7 7"><path d="M0.5 0.5 L6.5 6.5 M6.5 0.5 L0.5 6.5" stroke="#cfcfcf" stroke-width="1.1"/></svg>
  </div>
  <div id="ttabs" class="abs">
    <div class="abs" style="left:40px;top:0;width:120px;height:27px;color:#868686;font-size:8.8px;line-height:27px;text-align:center;white-space:nowrap">er@er-MS-7D48: ~</div>
    <div class="abs" style="left:189px;top:0;color:#555;font-size:10px;line-height:26px">&#215;</div>
    <div class="abs" style="left:247px;top:0;width:120px;height:27px;color:#c2c2c2;font-size:8.8px;line-height:27px;text-align:center;white-space:nowrap">er@er-MS-7D48: ~</div>
    <div class="abs" style="left:392px;top:0;color:#666;font-size:10px;line-height:26px">&#215;</div>
    <svg class="abs" style="left:424px;top:11px" width="9" height="6" viewBox="0 0 9 6"><path d="M0.5 0.5 L4.5 4.5 L8.5 0.5" fill="none" stroke="#bcbcbc" stroke-width="1.1"/></svg>
    <div class="abs" style="left:209px;top:24.5px;width:199px;height:2.5px;background:#e95420"></div>
  </div>
  <div class="abs" style="left:436px;top:62px;width:4px;height:240px;background:#42152f;border-radius:2px"></div>
  <div id="tcontent" class="abs"><b style="color:#4ea878">er@er-MS-7D48</b>:<b style="color:#5a7ab8">~</b>$ ros2 run pro450_isaac_moveit2_control isaac_sync_plan --r
os-args -p ip:=192.168.0.232 -p port:=4500
[INFO] [1776312095.715487378] [sync_plan_bridge]: current pymycobot librar
y version: 4.0.4
[INFO] [1776312095.715772030] [sync_plan_bridge]: Connecting Pro450: ip=19
2.168.0.232, port=4500
[INFO] [1776312099.698734880] [sync_plan_bridge]: Bridge ready: action=/ar
m_group_controller/follow_joint_trajectory, joint_command=/joint_command,
sync_real_robot=True
[INFO] [1776312124.236636323] [sync_plan_bridge]: Trajectory execution for
warded to Isaac successfully
[INFO] [1776312146.341784128] [sync_plan_bridge]: Trajectory execution for
warded to Isaac successfully
<span style="display:inline-block;width:5.8px;height:11px;border:1px solid #d8d0d6;vertical-align:-2px"></span></div>
<svg class="abs" style="left:271px;top:121px" width="7" height="14" viewBox="0 0 7 14"><path d="M1 1 H6 M3.5 1 V13 M1 13 H6" stroke="#222" stroke-width="2.2"/><path d="M1.3 1 H5.7 M3.5 1 V13 M1.3 13 H5.7" stroke="#f0f0f0" stroke-width="0.9"/></svg>
</div>

<div id="rviz" class="abs">
  <div class="abs" style="left:0;top:0;width:681px;height:8px;background:#ebebeb;border-bottom:1px solid #d4d4d4;overflow:hidden"><div class="abs" style="left:125.0px;top:0;width:2px;height:2px;background:#8c8c8c;border-radius:0 0 1px 1px"></div><div class="abs" style="left:156.9px;top:0;width:2px;height:2px;background:#8c8c8c;border-radius:0 0 1px 1px"></div><div class="abs" style="left:167.2px;top:0;width:2px;height:2px;background:#8c8c8c;border-radius:0 0 1px 1px"></div><div class="abs" style="left:173.4px;top:0;width:2px;height:2px;background:#8c8c8c;border-radius:0 0 1px 1px"></div><div class="abs" style="left:204.7px;top:0;width:2px;height:2px;background:#8c8c8c;border-radius:0 0 1px 1px"></div><div class="abs" style="left:248.8px;top:0;width:2px;height:2px;background:#8c8c8c;border-radius:0 0 1px 1px"></div><div class="abs" style="left:263.5px;top:0;width:2px;height:2px;background:#8c8c8c;border-radius:0 0 1px 1px"></div><div class="abs" style="left:298.4px;top:0;width:2px;height:2px;background:#8c8c8c;border-radius:0 0 1px 1px"></div><div class="abs" style="left:301.0px;top:0;width:2px;height:2px;background:#8c8c8c;border-radius:0 0 1px 1px"></div><div class="abs" style="left:331.5px;top:0;width:2px;height:2px;background:#8c8c8c;border-radius:0 0 1px 1px"></div><div class="abs" style="left:357.2px;top:0;width:2px;height:2px;background:#8c8c8c;border-radius:0 0 1px 1px"></div><div class="abs" style="left:399.5px;top:0;width:2px;height:2px;background:#8c8c8c;border-radius:0 0 1px 1px"></div><div class="abs" style="left:430.8px;top:0;width:2px;height:2px;background:#8c8c8c;border-radius:0 0 1px 1px"></div><div class="abs" style="left:463.9px;top:0;width:2px;height:2px;background:#8c8c8c;border-radius:0 0 1px 1px"></div><div class="abs" style="left:491.4px;top:0;width:2px;height:2px;background:#8c8c8c;border-radius:0 0 1px 1px"></div><div class="abs" style="left:531.8px;top:0;width:2px;height:2px;background:#8c8c8c;border-radius:0 0 1px 1px"></div><div class="abs" style="left:563.0px;top:0;width:2px;height:2px;background:#8c8c8c;border-radius:0 0 1px 1px"></div></div>
  <div class="abs" style="left:0;top:7.5px;width:681px;height:14px;background:#eeeeee"></div>
  <div class="rt" style="left:6.4px;top:9px;font-size:9.8px;color:#333"><u>F</u>ile</div>
  <div class="rt" style="left:31.8px;top:9px;font-size:9.8px;color:#333"><u>P</u>anels</div>
  <div class="rt" style="left:70.5px;top:9px;font-size:9.8px;color:#333"><u>H</u>elp</div>
  <div class="abs" style="left:0;top:21.5px;width:681px;height:25px;background:#f3f3f3;border-top:1px solid #e2e2e2;border-bottom:1px solid #d8d8d8"></div>
  <div class="abs" style="left:3px;top:28px;width:3px;height:15px;background:radial-gradient(circle,#b0b0b0 0.7px,transparent 0.8px) 0 0/3px 3px"></div>
  <div class="abs" style="left:8.6px;top:25.4px;width:55px;height:19.4px;background:#dddddd;border:1px solid #c6c6c6;border-radius:3px"></div>
  <svg class="abs" style="left:10.5px;top:28px" width="12" height="13" viewBox="0 0 12 13"><path d="M3.5 7 V1.8 Q3.5 0.8 4.5 0.8 Q5.5 0.8 5.5 1.8 V5.5 L6 5.5 V4.6 Q6 3.8 6.9 3.8 Q7.8 3.8 7.8 4.6 V5.6 Q7.8 4.8 8.7 4.8 Q9.6 4.8 9.6 5.6 V6.2 Q9.6 5.5 10.4 5.5 Q11.2 5.5 11.2 6.4 V10 Q11.2 12.2 9 12.2 H4.5 Q2.6 12.2 1.8 10.4 L0.8 8.2 Q0.5 7.2 1.4 7 Q2.3 6.8 3.5 8.5Z" fill="#fff" stroke="#444" stroke-width="0.8"/></svg>
  <div class="rt" style="left:21.8px;top:29.5px;font-size:8.2px;color:#2a2a2a">Interact</div>
  <svg class="abs" style="left:66px;top:27.5px" width="12" height="14" viewBox="0 0 12 14"><path d="M6 0.5 L8 3 H7 V6 H10 V5 L11.5 7 L10 9 V8 H7 V11 H8 L6 13.5 L4 11 H5 V8 H2 V9 L0.5 7 L2 5 V6 H5 V3 H4Z" fill="#e8e8e8" stroke="#777" stroke-width="0.7"/></svg>
  <div class="rt" style="left:77.9px;top:29.5px;font-size:7.9px;color:#2a2a2a">Move Camera</div>
  <div class="abs" style="left:142.5px;top:28.5px;width:11px;height:11px;background:#f6f0b8;border:1px dotted #777"></div>
  <div class="abs" style="left:150.5px;top:36.5px;width:3px;height:3px;background:#333"></div>
  <div class="rt" style="left:155px;top:29.5px;font-size:8.2px;color:#2a2a2a">Select</div>
  <svg class="abs" style="left:193.5px;top:29px" width="10" height="10" viewBox="0 0 10 10"><path d="M5 0.5 V9.5 M0.5 5 H9.5" stroke="#4a7cc0" stroke-width="2.6"/><path d="M5 1.2 V8.8 M1.2 5 H8.8" stroke="#8ab0e4" stroke-width="1"/></svg>
  <div class="abs" style="left:224px;top:32.5px;width:10px;height:3px;background:#5a88c8;border-radius:1px"></div>
  <div class="arrd" style="left:234px;top:40px;border-left-width:2px;border-right-width:2px;border-top-width:2.5px;border-top-color:#666"></div>

  <!-- Displays panel -->
  <div class="hdr" style="top:47.5px"><svg class="abs" style="left:2px;top:2px" width="11" height="11" viewBox="0 0 11 11"><rect x="0.5" y="0.5" width="10" height="7.5" fill="#333"/><rect x="1.5" y="1.5" width="2.7" height="5.5" fill="#d85050"/><rect x="4.2" y="1.5" width="2.7" height="5.5" fill="#58b858"/><rect x="6.9" y="1.5" width="2.6" height="5.5" fill="#6078d8"/><rect x="4" y="8" width="3" height="1.6" fill="#333"/><rect x="2.5" y="9.5" width="6" height="1.2" fill="#333"/></svg><div class="t">Displays</div><div class="xbtn"></div></div>
  <div class="abs" style="left:0;top:61.5px;width:323.5px;height:104px;background:#fff;border:1px solid #c8c8c8;overflow:hidden">
    <div class="abs" style="left:161px;top:0;width:1px;height:104px;background:#e8e8e8"></div>
    <div class="abs" style="left:-1px;top:-62.5px;width:323px;height:170px"><div class="arr" style="left:6px;top:66.5px"></div><svg class="abs" style="left:14px;top:63.5px" width="11" height="11" viewBox="0 0 11 11"><circle cx="5.5" cy="5.5" r="4.2" fill="#7aa6e0" stroke="#4c80c8" stroke-width="1.6" stroke-dasharray="1.6 1.1"/><circle cx="5.5" cy="5.5" r="1.6" fill="#e8f0fa"/></svg><div class="rt" style="left:29.6px;top:63px">Global Options</div><div class="arr" style="left:6px;top:78.8px"></div><svg class="abs" style="left:14px;top:76px" width="11" height="10" viewBox="0 0 11 10"><path d="M1 5.5 L4 8.5 L10 1" fill="none" stroke="#3a9a3a" stroke-width="1.6"/></svg><div class="rt" style="left:29.6px;top:75.3px">Global Status: Ok</div><div class="arr" style="left:6px;top:91px"></div><svg class="abs" style="left:14px;top:89.5px" width="11" height="8" viewBox="0 0 11 8"><path d="M0.5 4 Q5.5 -1 10.5 4 Q5.5 9 0.5 4Z" fill="none" stroke="#666" stroke-width="1"/><circle cx="5.5" cy="4" r="1.5" fill="#666"/></svg><div class="rt" style="left:29.6px;top:87.5px;color:#3f7fcc;font-weight:bold">Grid</div><div class="cb" style="left:164px;top:88.5px"></div><svg class="abs" style="left:165.5px;top:90px" width="7" height="7" viewBox="0 0 7 7"><path d="M0.8 3.5 L2.8 6 L6.4 0.6" fill="none" stroke="#2f6fc0" stroke-width="1.2"/></svg><div class="arrd" style="left:5.5px;top:104.5px"></div><div class="abs" style="left:14.5px;top:100.5px;width:10.5px;height:10.5px;border-radius:50%;background:#e8892a;color:#fff;font-size:8px;line-height:10.5px;text-align:center;font-weight:bold">!</div><div class="rt" style="left:29.6px;top:99.8px;color:#d3952c;font-weight:bold">MotionPlanning</div><div class="cb" style="left:164px;top:100.8px"></div><svg class="abs" style="left:165.5px;top:102.3px" width="7" height="7" viewBox="0 0 7 7"><path d="M0.8 3.5 L2.8 6 L6.4 0.6" fill="none" stroke="#c88a20" stroke-width="1.2"/></svg><div class="arr" style="left:20px;top:115.5px"></div><div class="abs" style="left:28.5px;top:112.8px;width:10.5px;height:10.5px;border-radius:50%;background:#e8892a;color:#fff;font-size:8px;line-height:10.5px;text-align:center;font-weight:bold">!</div><div class="rt" style="left:43px;top:112px;color:#d8a85a">Status: Warn</div><div class="rt" style="left:28.7px;top:124.3px">Move Group Namespace</div><div class="rt" style="left:28.7px;top:136.5px">Robot Description</div><div class="rt" style="left:164px;top:136.5px">robot_description</div><div class="rt" style="left:28.7px;top:148.8px">Planning Scene Topic</div><div class="rt" style="left:164px;top:148.8px">monitored_planning_scene</div><div class="rt" style="left:28.7px;top:161px">Scene Geometry</div><div class="rt" style="left:164px;top:161px"></div></div>
    <div class="sbar" style="top:0;height:103px;left:313.5px"></div>
    <div class="abs" style="left:314px;top:10px;width:8.5px;height:25px;background:#fff;border:1px solid #d8d8d8;border-radius:1px"></div>
    <div class="abs" style="left:314px;top:0;width:8.5px;height:10px;background:#fafafa"></div>
    <div class="abs" style="left:315.5px;top:3.5px;border-left:3px solid transparent;border-right:3px solid transparent;border-bottom:3.5px solid #444"></div>
    <div class="abs" style="left:314px;top:93px;width:8.5px;height:10px;background:#fafafa"></div>
    <div class="abs" style="left:315.5px;top:96.5px;border-left:3px solid transparent;border-right:3px solid transparent;border-top:3.5px solid #444"></div>
  </div>
  <div class="abs" style="left:0;top:169px;width:323.5px;height:44px;background:#fff;border:1px solid #cdcdcd"></div>
  <div class="btn" style="left:1.7px;top:217.5px;width:76px">Add</div>
  <div class="btn dis" style="left:82.6px;top:217.5px;width:77.5px">Duplicate</div>
  <div class="btn dis" style="left:164px;top:217.5px;width:77px">Remove</div>
  <div class="btn dis" style="left:245px;top:217.5px;width:78px">Rename</div>

  <!-- MotionPlanning panel -->
  <div class="hdr" style="top:240.7px"><svg class="abs" style="left:3px;top:2px" width="9" height="11" viewBox="0 0 9 11"><path d="M1 1 L5 3.5 L2.5 5.5 L5.5 8 L2 10.5" fill="none" stroke="#3a8ad8" stroke-width="2.2"/></svg><div class="t">MotionPlanning</div><div class="xbtn"></div></div>
  <div class="abs" style="left:6.8px;top:278px;width:310.5px;height:216px;background:#f9f9f9;border:1px solid #cacaca"></div>
  <div class="tab" style="left:6.8px;width:50.5px">Context</div>
  <div class="tab" style="left:111px;width:44px">Joints</div>
  <div class="tab" style="left:155px;width:78px">Scene Objects</div>
  <div class="tab" style="left:233px;width:66px;text-align:left;padding-left:8px">Stored Scenes</div>
  <div class="tab" style="left:58px;top:261.4px;height:17.6px;width:53.5px;background:#f9f9f9;line-height:16px;z-index:2">Planning</div>
  <div class="abs" style="left:298.9px;top:260.3px;width:8.3px;height:18.7px;background:#f7f7f7;border:1px solid #dedede;border-radius:2px 2px 0 0"></div>
  <div class="arr" style="left:301.5px;top:267px;border-left-color:#c8c8c8;transform:scaleX(-1)"></div>
  <div class="abs" style="left:307.7px;top:260.3px;width:9.5px;height:18.7px;background:#f7f7f7;border:1px solid #cfcfcf;border-radius:2px 2px 0 0"></div>
  <div class="arr" style="left:311px;top:267px;border-left-color:#333"></div>

  <div class="rt" style="left:13px;top:286px">Commands</div>
  <div class="gbox" style="left:13.3px;top:299px;width:82px;height:117.3px"></div>
  <div class="btn" style="left:19.2px;top:306.5px;width:69.6px"><u>P</u>lan</div>
  <div class="btn dis" style="left:19.2px;top:325px;width:69.6px">E<u>x</u>ecute</div>
  <div class="btn" style="left:19.2px;top:344px;width:69.6px;background:#fafafa">Plan &amp; E<u>x</u>ecute</div>
  <div class="btn dis" style="left:19.2px;top:363px;width:69.6px"><u>S</u>top</div>
  <div class="rt" style="left:19.2px;top:381px;width:69.6px;text-align:center">Executed</div>
  <div class="btn dis" style="left:19.2px;top:395.5px;width:69.6px">Clear octomap</div>

  <div class="rt" style="left:96px;top:286px">Query</div>
  <div class="gbox" style="left:96.6px;top:299px;width:81px;height:117.3px"></div>
  <div class="rt" style="left:101.5px;top:306.6px">Planning Group:</div>
  <div class="combo" style="left:101.6px;top:322.4px;width:70px">arm_group</div>
  <div class="rt" style="left:101.5px;top:342.7px">Start State:</div>
  <div class="combo" style="left:101.6px;top:358.5px;width:70px">&lt;current&gt;</div>
  <div class="rt" style="left:101.5px;top:379px">Goal State:</div>
  <div class="combo" style="left:101.6px;top:395px;width:70px">&lt;current&gt;</div>

  <div class="rt" style="left:182px;top:286px">Options</div>
  <div class="gbox" style="left:182.5px;top:299.2px;width:128px;height:188.2px"></div>
  <div class="rt" style="left:189.5px;top:308.7px">Planning Time (s):</div>
  <div class="spin" style="left:268.6px;top:306.7px;width:34px">5.0<i class="sp1"></i><i class="sp2"></i></div>
  <div class="rt" style="left:189.5px;top:326.4px">Planning Attempts:</div>
  <div class="spin" style="left:276.2px;top:325px;width:26.2px;padding-left:2px">10<i class="sp1"></i><i class="sp2"></i></div>
  <div class="rt" style="left:189.5px;top:344px">Velocity Scaling:</div>
  <div class="spin" style="left:262px;top:343px;width:40.4px">0.10<i class="sp1"></i><i class="sp2"></i></div>
  <div class="rt" style="left:189.5px;top:361.6px">Accel. Scaling:</div>
  <div class="spin" style="left:252.2px;top:360.5px;width:50.2px">0.10<i class="sp1"></i><i class="sp2"></i></div>
  <div class="cb" style="left:189.3px;top:393px"></div><div class="rt" style="left:201.9px;top:391.8px">Use Cartesian Path</div>
  <div class="cb" style="left:189.3px;top:408.8px"></div><div class="rt" style="left:201.9px;top:407.6px">Collision-aware IK</div>
  <div class="cb" style="left:189.3px;top:424.6px"></div><svg class="abs" style="left:190.8px;top:426.3px" width="7" height="7" viewBox="0 0 7 7"><path d="M0.8 3.6 L2.7 6 L6.4 0.6" fill="none" stroke="#222" stroke-width="1.1"/></svg><div class="rt" style="left:201.9px;top:423.4px">Approx IK Solutions</div>
  <div class="cb" style="left:189.3px;top:440px"></div><div class="rt" style="left:201.9px;top:438.8px">External Comm.</div>
  <div class="cb" style="left:189.3px;top:455.6px"></div><div class="rt" style="left:201.9px;top:454.4px">Replanning</div>
  <div class="cb" style="left:189.3px;top:471.2px"></div><div class="rt" style="left:201.9px;top:470px">Sensor Positioning</div>

  <div class="rt" style="left:13px;top:448.5px">Path Constraints</div>
  <div class="gbox" style="left:13px;top:462.5px;width:164.5px;height:25px"></div>
  <div class="combo" style="left:19.2px;top:466px;width:152.4px">None</div>

  <!-- Views panel -->
  <div class="hdr" style="top:505px"><svg class="abs" style="left:2px;top:3.5px" width="12" height="7" viewBox="0 0 12 7"><path d="M0.5 0.5 L3.5 3.5 L0.5 6.5Z" fill="#444"/><rect x="4" y="1" width="7.5" height="5" rx="1" fill="#444"/></svg><div class="t">Views</div><div class="xbtn"></div></div>
  <div class="rt" style="left:1.5px;top:525px">Type:</div>
  <div class="combo" style="left:29px;top:523.4px;width:211.6px;padding-left:4px">Orbit (rviz_default_plugins)</div>
  <div class="btn" style="left:271px;top:523.4px;width:51.7px;height:15.5px">Zero</div>
  <div class="abs" style="left:0;top:545px;width:323.5px;height:55px;background:#fff;border:1px solid #c8c8c8;overflow:hidden">
    <div class="abs" style="left:161px;top:0;width:1px;height:55px;background:#e8e8e8"></div>
    <div class="arrd" style="left:4.5px;top:4.5px;border-top-color:#666"></div>
    <div class="rt" style="left:15px;top:-1.5px;font-weight:bold;color:#222">Current View</div>
    <div class="rt" style="left:163px;top:-1.5px;font-weight:bold;color:#222">Orbit (rviz_default_plugins)</div>
    <div class="rt" style="left:27.7px;top:9.7px">Near Clip Distance</div><div class="rt" style="left:163px;top:9.7px">0.01</div>
    <div class="rt" style="left:27.7px;top:21.0px">Invert Z Axis</div><div class="cb" style="left:163px;top:21.5px;border-color:#d4d4d4"></div>
    <div class="rt" style="left:27.7px;top:32.0px">Target Frame</div><div class="rt" style="left:163px;top:32.0px">base</div>
    <div class="rt" style="left:27.7px;top:43.0px">Distance</div><div class="rt" style="left:163px;top:43.0px">2</div>
    <div class="sbar" style="top:0;height:54px;left:313.5px"></div>
    <div class="abs" style="left:314px;top:10px;width:8.5px;height:20px;background:#fff;border:1px solid #d8d8d8"></div>
    <div class="abs" style="left:314px;top:0;width:8.5px;height:10px;background:#fafafa"></div>
    <div class="abs" style="left:315.5px;top:3.5px;border-left:3px solid transparent;border-right:3px solid transparent;border-bottom:3.5px solid #444"></div>
    <div class="abs" style="left:314px;top:44px;width:8.5px;height:10px;background:#fafafa"></div>
    <div class="abs" style="left:315.5px;top:47.5px;border-left:3px solid transparent;border-right:3px solid transparent;border-top:3.5px solid #444"></div>
  </div>
  <div class="btn" style="left:1.5px;top:605.4px;width:103.5px;height:15.6px">Save</div>
  <div class="btn" style="left:109px;top:605.4px;width:104.6px;height:15.6px">Remove</div>
  <div class="btn" style="left:217.9px;top:605.4px;width:104.8px;height:15.6px">Rename</div>
  <div class="btn" style="left:1.5px;top:624.5px;width:33.5px;height:15px">Reset</div>

  <div class="arr" style="left:331px;top:332.5px;transform:scaleX(-1);border-left-color:#555"></div>
  <div id="r3d" class="abs">
<svg class="abs" style="left:0;top:0" width="337" height="563"><g stroke="#a0a0a2" stroke-width="1" fill="none"><line x1="-1233.9" y1="224.5" x2="274.5" y2="62.8"/><line x1="-1497.3" y1="298.1" x2="332.3" y2="71.8"/><line x1="-1974.8" y1="431.6" x2="402.7" y2="82.8"/><line x1="-3106.1" y1="747.9" x2="489.9" y2="96.5"/><line x1="-9145.6" y1="2436.5" x2="601.0" y2="113.8"/><line x1="-17506.5" y1="6554.4" x2="747.4" y2="136.7"/><line x1="-8291.3" y1="6483.6" x2="948.9" y2="168.2"/><line x1="924.0" y1="6412.9" x2="1243.9" y2="214.3"/><line x1="10139.3" y1="6342.1" x2="1717.4" y2="288.2"/><line x1="19354.6" y1="6271.4" x2="2601.1" y2="426.3"/><line x1="28569.9" y1="6200.6" x2="4836.1" y2="775.5"/><line x1="-1233.9" y1="224.5" x2="-24053.4" y2="6604.6"/><line x1="-902.4" y1="188.9" x2="-17743.8" y2="6556.2"/><line x1="-648.8" y1="161.8" x2="-11434.1" y2="6507.7"/><line x1="-448.5" y1="140.3" x2="-5124.4" y2="6459.3"/><line x1="-286.3" y1="122.9" x2="1185.3" y2="6410.9"/><line x1="-152.2" y1="108.5" x2="7494.9" y2="6362.4"/><line x1="-39.6" y1="96.5" x2="13804.6" y2="6314.0"/><line x1="56.3" y1="86.2" x2="20114.3" y2="6265.6"/><line x1="139.1" y1="77.3" x2="26423.9" y2="6217.1"/><line x1="211.1" y1="69.6" x2="8768.1" y2="1674.3"/><line x1="274.5" y1="62.8" x2="4836.1" y2="775.5"/></g></svg>
<svg class="abs" style="left:0;top:0" width="337" height="563" viewBox="860 53 337 563">
<defs>
<filter id="rb" x="-20%" y="-20%" width="140%" height="140%"><feGaussianBlur stdDeviation="0.6"/></filter>
<linearGradient id="cylg" x1="0" y1="0" x2="1" y2="0"><stop offset="0" stop-color="#9a9a9a"/><stop offset="0.35" stop-color="#e0e0e0"/><stop offset="0.7" stop-color="#c8c8c8"/><stop offset="1" stop-color="#8a8a8a"/></linearGradient>
<linearGradient id="boxg" x1="0" y1="0" x2="1" y2="0"><stop offset="0" stop-color="#b0b0b0"/><stop offset="1" stop-color="#c8c8c8"/></linearGradient>
<pattern id="gstripe" width="6" height="6" patternUnits="userSpaceOnUse" patternTransform="rotate(30)"><rect width="6" height="6" fill="#2e9e2e"/><rect width="3" height="6" fill="#5ad05a"/></pattern>
</defs>
<g filter="url(#rb)">
<!-- foot plate -->
<path d="M978,400 L1000,412 L1024,404 L1024,396 L1002,386 L978,392Z" fill="#8c8c8c"/>
<!-- box -->
<path d="M1008,360 L1028,356 L1035,362 L1035,398 L1014,404 L1008,398Z" fill="url(#boxg)"/>
<path d="M1008,360 L1028,356 L1035,362 L1015,366Z" fill="#d8d8d8"/>
<!-- cylinder base -->
<path d="M981,368 L981,402 Q998,411 1016,402 L1016,368Z" fill="url(#cylg)"/>
<ellipse cx="998.5" cy="368" rx="17.5" ry="5.5" fill="#e4e4e4"/>
<!-- column -->
<rect x="988" y="354" width="20.5" height="14" fill="#c4c4c4"/>
<ellipse cx="998.2" cy="368" rx="10.3" ry="3" fill="#b8b8b8"/>
<!-- elbow lower section -->
<path d="M998,356 L998,344 Q999,334 1010,328" fill="none" stroke="#c87428" stroke-width="21" stroke-linecap="round"/>
<path d="M996,354 L996,344 Q997,335 1007,329" fill="none" stroke="#e89a50" stroke-width="15" stroke-linecap="round"/>
<!-- forearm -->
<path d="M975,297 L1011,329" fill="none" stroke="#d07a30" stroke-width="16" stroke-linecap="round"/>
<path d="M974,295 L1010,327" fill="none" stroke="#eea060" stroke-width="11" stroke-linecap="round"/>
<!-- upper arm -->
<path d="M960,297 L1006,259" fill="none" stroke="#c46c20" stroke-width="17" stroke-linecap="round"/>
<path d="M959,295 L1005,257" fill="none" stroke="#f0a866" stroke-width="12" stroke-linecap="round"/>
<path d="M1004,259 L1012,240 L1024,229" fill="none" stroke="#d07a30" stroke-width="13" stroke-linecap="round"/><path d="M1003,257 L1011,239 L1023,228" fill="none" stroke="#eea060" stroke-width="8" stroke-linecap="round"/>
</g>
<!-- interactive marker -->
<g>
<ellipse cx="998" cy="232" rx="11.5" ry="35" fill="none" stroke="#c82020" stroke-width="5" opacity="0.8" transform="rotate(-22 998 232)"/>
<ellipse cx="998" cy="234" rx="38" ry="7" fill="none" stroke="#2028c0" stroke-width="3" opacity="0.65" transform="rotate(12 998 234)"/>
<g transform="rotate(-12 998.7 231.5)">
<ellipse cx="998.7" cy="231.5" rx="31.5" ry="36" fill="none" stroke="#1f8a22" stroke-width="8.5"/>
<ellipse cx="998.7" cy="231.5" rx="31.5" ry="36" fill="none" stroke="#58d058" stroke-width="8.5" stroke-dasharray="5.3 5.3"/>
</g>
<path d="M999.7,177.5 L992.5,191.5 L1006.5,191.5Z" fill="#1a22d0"/>
<path d="M999.7,287.5 L992.5,273.5 L1006.5,273.5Z" fill="#1a22b0"/>
<path d="M948.5,240.5 L965,233 L965,248Z" fill="#d01818"/>
<path d="M1046.5,228 L1033,220 L1033,236Z" fill="#c81818"/>
<path d="M1030,241 L1016,246 L1023,256Z" fill="#30c030"/>
<circle cx="999.7" cy="231.7" r="14.5" fill="#4aaec0" opacity="0.8"/>
<circle cx="995" cy="230" r="9" fill="#a8dcd8" opacity="0.55"/>
</g>
</svg>

  </div>
</div>
</body></html>
